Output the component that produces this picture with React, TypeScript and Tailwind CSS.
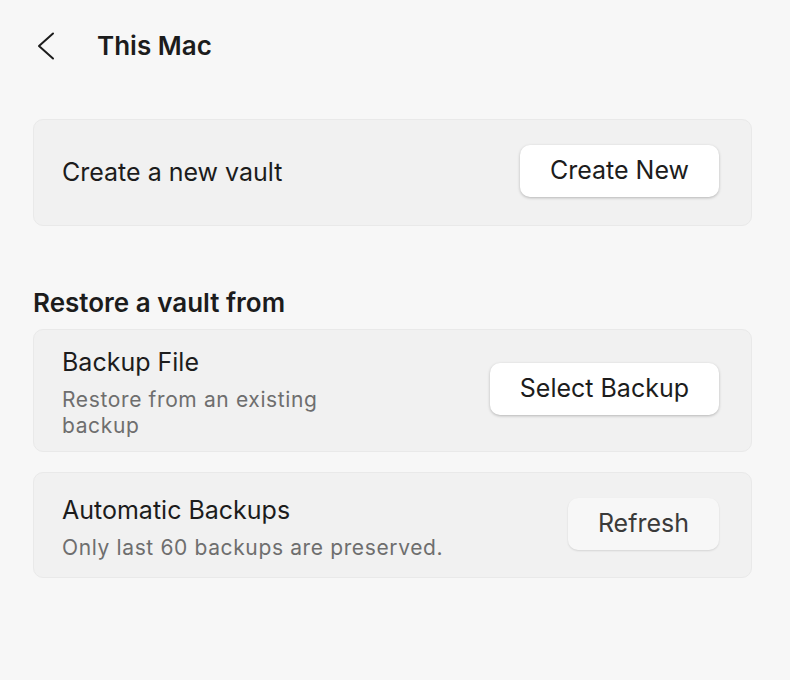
const font = { fontFamily: 'Inter, "Noto Sans", sans-serif' };

function BackChevron() {
  return (
    <svg width="18" height="28" viewBox="0 0 18 28" fill="none" className="shrink-0">
      <path d="M16 1.5 L2 14 L16 26.5" stroke="#1c1c1c" strokeWidth="2" strokeLinecap="round" strokeLinejoin="round" />
    </svg>
  );
}

function ActionButton({ label, muted }: { label: string; muted?: boolean }) {
  return (
    <button
      type="button"
      className={
        muted
          ? 'mb-[3px] h-[52px] shrink-0 rounded-[10px] bg-[#f7f7f7] px-[30px] text-[25px] text-[#3a3a3a] shadow-[0_1px_2px_rgba(0,0,0,0.12)]'
          : 'mb-[3px] h-[52px] shrink-0 rounded-[10px] bg-white px-[30px] text-[25px] text-[#1c1c1c] shadow-[0_1px_3px_rgba(0,0,0,0.25)]'
      }
    >
      {label}
    </button>
  );
}

function Row({
  title,
  subtitle,
  action,
  muted,
  narrow
}: {
  title: string;
  subtitle?: string;
  action: string;
  muted?: boolean;
  narrow?: boolean;
}) {
  return (
    <div className="flex min-h-[106px] items-center justify-between gap-10 rounded-[10px] border border-[#e9e9e9] bg-[#f1f1f1] py-[12px] pl-[28px] pr-[32px]">
      <div className="flex flex-col pt-[5px]">
        <span className="text-[25px] leading-[30px] text-[#1c1c1c]">{title}</span>
        {subtitle && (
          <span
            className={`mt-[10px] text-[21px] leading-[26px] tracking-[0.03em] text-[#6e6e6e] ${narrow ? 'max-w-[300px]' : ''}`}
          >
            {subtitle}
          </span>
        )}
      </div>
      <ActionButton label={action} muted={muted} />
    </div>
  );
}

export default function App() {
  return (
    <div style={font} className="min-h-[680px] w-[790px] bg-[#f7f7f7] pl-[33px] pr-[38px] pt-[28px]">
      <header className="flex h-[36px] items-center">
        <div className="flex w-[64px] items-center pl-[4px]">
          <BackChevron />
        </div>
        <h1 className="text-[26px] leading-[36px] font-semibold text-[#1c1c1c]">This Mac</h1>
      </header>

      <div className="mt-[55px] flex h-[107px] items-center justify-between rounded-[10px] border border-[#e9e9e9] bg-[#f1f1f1] pl-[28px] pr-[32px]">
        <span className="text-[25px] text-[#1c1c1c]">Create a new vault</span>
        <ActionButton label="Create New" />
      </div>

      <h2 className="mt-[61px] text-[26px] leading-[32px] font-semibold text-[#1c1c1c]">Restore a vault from</h2>

      <div className="mt-[10px] flex flex-col gap-[20px]">
        <Row
          title="Backup File"
          subtitle="Restore from an existing backup"
          action="Select Backup"
          narrow
        />
        <Row
          title="Automatic Backups"
          subtitle="Only last 60 backups are preserved."
          action="Refresh"
          muted
        />
      </div>
    </div>
  );
}
